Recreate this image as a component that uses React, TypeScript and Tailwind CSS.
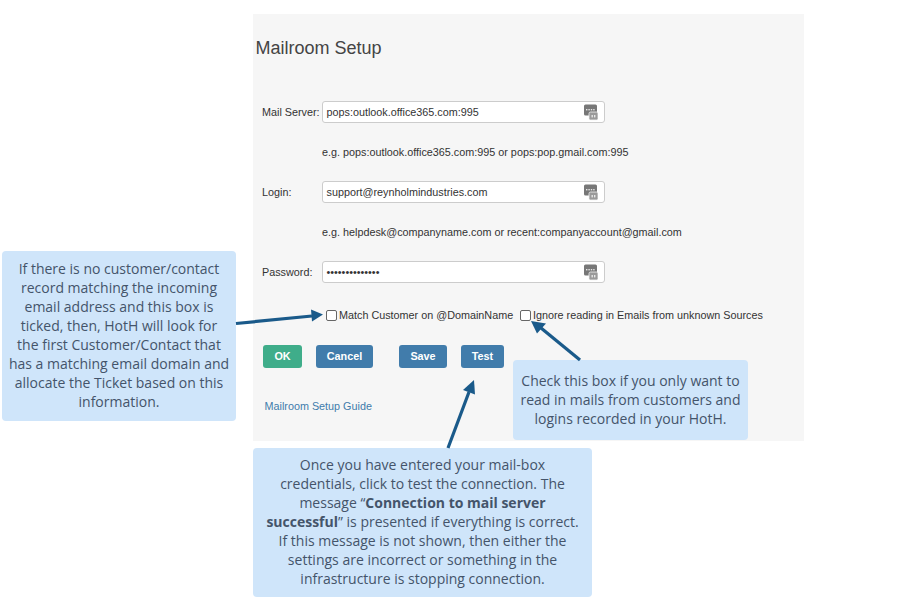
const FORM = "font-['Liberation_Sans',Arial,sans-serif]";
const NOTE = "font-['Open_Sans','Noto_Sans',sans-serif]";

function PassIcon() {
  return (
    <svg width="14" height="17" viewBox="0 0 14 17" className="absolute right-[6px] top-[2px]">
      <rect x="0" y="0.5" width="13" height="11" rx="1.5" fill="#777" />
      <rect x="5" y="8" width="9" height="8" rx="1.5" fill="#999" stroke="#f2f2f2" strokeWidth="0.8" />
      <g fill="#e6e6e6">
        <rect x="2" y="5" width="1.4" height="1.4" />
        <rect x="4.4" y="5" width="1.4" height="1.4" />
        <rect x="6.8" y="5" width="1.4" height="1.4" />
        <rect x="9.2" y="5" width="1.4" height="1.4" />
        <rect x="7.5" y="11" width="1.4" height="2.4" />
        <rect x="10" y="11" width="1.4" height="2.4" />
      </g>
    </svg>
  );
}

function Field({ label, value }: { label: string; value: string }) {
  return (
    <div className="flex h-[22px] items-center">
      <label className="w-[60px] shrink-0 whitespace-nowrap text-[10.8px] text-[#333]">{label}</label>
      <div className="relative flex h-[22px] w-[283px] items-center rounded-[3px] border border-[#ccc] bg-white pl-[3.5px] text-[10.8px] text-[#333]">
        {value}
        <PassIcon />
      </div>
    </div>
  );
}

function Hint({ children }: { children: string }) {
  return <p className="ml-[60px] flex h-[58px] items-center text-[10.8px] text-[#333]">{children}</p>;
}

function Btn({ children, color, width, ml }: { children: string; color: string; width: string; ml: string }) {
  return (
    <button className={`h-[23px] rounded-[3px] text-[10.8px] font-bold text-white ${color} ${width} ${ml}`}>{children}</button>
  );
}

function Note({ className, children }: { className: string; children: React.ReactNode }) {
  return (
    <div className={`absolute flex items-center justify-center whitespace-nowrap rounded-[4px] bg-[#cfe5fa] pb-[2px] text-center text-[14px] leading-[19px] text-[#44546a] ${NOTE} ${className}`}>
      <div>{children}</div>
    </div>
  );
}

export default function App() {
  return (
    <div className={`relative h-[599px] w-[898px] overflow-hidden bg-white ${FORM}`}>
      <div className="ml-[253px] h-[441px] w-[551px] pt-[14px]">
        <div className="h-[427px] bg-[#f6f6f6]">
          <h1 className="pl-[2.5px] pt-[23px] text-[18px] leading-[22px] text-[#444]">Mailroom Setup</h1>
          <div className="pl-[9px] pt-[42px]">
            <Field label="Mail Server:" value="pops:outlook.office365.com:995" />
            <Hint>e.g. pops:outlook.office365.com:995 or pops:pop.gmail.com:995</Hint>
            <Field label="Login:" value="support@reynholmindustries.com" />
            <Hint>e.g. helpdesk@companyname.com or recent:companyaccount@gmail.com</Hint>
            <Field label="Password:" value="••••••••••••••" />
          </div>
          <div className="mt-[25px] flex h-[14px] items-center pl-[73px] text-[10.8px] text-[#333]">
            <span className="h-[11px] w-[11px] rounded-[2px] border border-[#666] bg-white" />
            <span className="ml-[2px] w-[175px] pt-[1px]">Match Customer on @DomainName</span>
            <span className="ml-[6px] h-[11px] w-[11px] rounded-[2px] border border-[#666] bg-white" />
            <span className="ml-[2px] pt-[1px]">Ignore reading in Emails from unknown Sources</span>
          </div>
          <div className="mt-[23px] flex pl-[10px]">
            <Btn color="bg-[#3fad8a]" width="w-[39px]" ml="ml-0">OK</Btn>
            <Btn color="bg-[#417cab]" width="w-[57px]" ml="ml-[14px]">Cancel</Btn>
            <Btn color="bg-[#417cab]" width="w-[48px]" ml="ml-[26px]">Save</Btn>
            <Btn color="bg-[#417cab]" width="w-[43px]" ml="ml-[14px]">Test</Btn>
          </div>
          <a className="ml-[11.5px] mt-[30px] block text-[10.8px] text-[#417cab]">Mailroom Setup Guide</a>
        </div>
      </div>

      <Note className="left-[2px] top-[251px] h-[170px] w-[234px]">
        If there is no customer/contact<br />record matching the incoming<br />email address and this box is<br />ticked, then, HotH will look for<br />the first Customer/Contact that<br />has a matching email domain and<br />allocate the Ticket based on this<br />information.
      </Note>
      <Note className="left-[513px] top-[360px] h-[80px] w-[235px]">
        Check this box if you only want to<br />read in mails from customers and<br />logins recorded in your HotH.
      </Note>
      <Note className="left-[253px] top-[448px] h-[149px] w-[339px]">
        Once you have entered your mail-box<br />credentials, click to test the connection. The<br />message “<b>Connection to mail server</b><br /><b>successful</b>” is presented if everything is correct.<br />If this message is not shown, then either the<br />settings are incorrect or something in the<br />infrastructure is stopping connection.
      </Note>

      <svg width="898" height="599" className="pointer-events-none absolute left-0 top-0">
        <g stroke="#1a5a8a" strokeWidth="3.2" fill="none">
          <line x1="236" y1="323.5" x2="312" y2="316" />
          <line x1="580" y1="360" x2="541" y2="328" />
          <line x1="448" y1="448" x2="469" y2="392" />
        </g>
        <g fill="#1a5a8a">
          <polygon points="323,314.5 311,309.5 312,321.5" />
          <polygon points="531,321 537,333.5 546,323.5" />
          <polygon points="474,380 463,390 475,394.5" />
        </g>
      </svg>
    </div>
  );
}
